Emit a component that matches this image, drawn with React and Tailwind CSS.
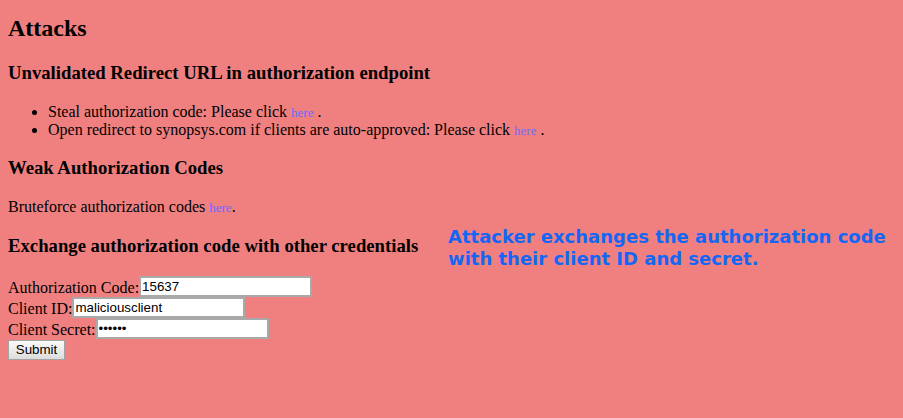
export default function App() {
  const link = "text-[13px] text-[#6b6bff]";
  const input =
    "align-bottom w-[173px] h-[21px] border-2 border-[#a9a9a9] bg-white px-[1px] text-[13.33px] leading-[15px] text-black font-['Liberation_Sans',Arial,sans-serif] outline-none";

  return (
    <div className="relative min-h-screen bg-[#f08080] px-2 text-[16px] leading-[normal] text-black font-['Liberation_Serif','Times_New_Roman',serif]">
      <h2 className="pt-[15px] mb-[19.92px] text-[24px] font-bold leading-[normal]">Attacks</h2>

      <h3 className="mb-[18.72px] text-[18.72px] font-bold leading-[normal]">
        Unvalidated Redirect URL in authorization endpoint
      </h3>
      <ul className="list-disc pl-[40px]">
        <li>
          Steal authorization code: Please click <a className={link}>here</a> .
        </li>
        <li>
          Open redirect to synopsys.com if clients are auto-approved: Please click{" "}
          <a className={link}>here</a> .
        </li>
      </ul>

      <h3 className="my-[18.72px] text-[18.72px] font-bold leading-[normal]">Weak Authorization Codes</h3>
      <p>
        Bruteforce authorization codes <a className={link}>here</a>.
      </p>

      <h3 className="my-[18.72px] text-[18.72px] font-bold leading-[normal]">
        Exchange authorization code with other credentials
      </h3>
      <form>
        <div className="flex items-end h-[21px]">
          <span className="leading-[19px]">Authorization Code:</span>
          <input className={input} defaultValue="15637" />
        </div>
        <div className="flex items-end h-[21px]">
          <span className="leading-[19px]">Client ID:</span>
          <input className={input} defaultValue="maliciousclient" />
        </div>
        <div className="flex items-end h-[21px]">
          <span className="leading-[19px]">Client Secret:</span>
          <input className={input} type="password" defaultValue="secret" />
        </div>
        <button
          type="button"
          className="mt-[1px] h-[20px] w-[57px] border border-[#a3a3a3] bg-gradient-to-b from-[#fafafa] to-[#dcdcdc] text-[13.33px] leading-[16px] text-black font-['Liberation_Sans',Arial,sans-serif]"
        >
          Submit
        </button>
      </form>

      {/* annotation overlay */}
      <div className="absolute left-[448px] top-[226px] text-[18px] font-bold leading-[22px] text-[#1466f5] font-['DejaVu_Sans',Verdana,sans-serif]">
        Attacker exchanges the authorization code
        <br />
        with their client ID and secret.
      </div>
    </div>
  );
}
